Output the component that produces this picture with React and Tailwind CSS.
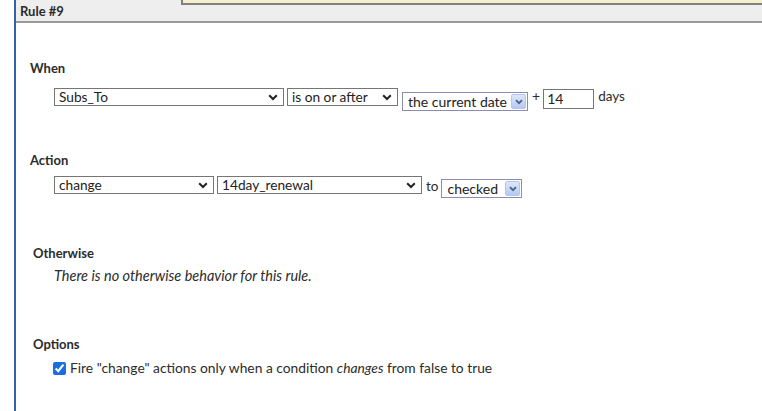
import React from "react";

const Chevron = ({ color = "#222", w = 10 }) => (
  <svg width={w} height="7" viewBox="0 0 10 7" className="shrink-0">
    <path d="M1.2 1.3 L5 5 L8.8 1.3" fill="none" stroke={color} strokeWidth="2" />
  </svg>
);

const Sel = ({ w, text }) => (
  <div
    className="flex items-center justify-between border border-[#767676] bg-white h-[18px] pl-[4px] pr-[5px] text-[13.7px] leading-none text-[#222]"
    style={{ width: w }}
  >
    <span>{text}</span>
    <Chevron />
  </div>
);

const BlueSel = ({ w, text }) => (
  <div
    className="flex items-center justify-between border border-[#8c8cb0] bg-white h-[19px] pl-[5px] pr-[1px] text-[14px] leading-none text-[#222]"
    style={{ width: w }}
  >
    <span>{text}</span>
    <div className="w-[15px] h-[15px] rounded-[2px] border border-[#b3c6ee] bg-gradient-to-b from-[#dde7fb] to-[#b4c9f3] flex items-center justify-center">
      <svg width="8" height="6" viewBox="0 0 8 6">
        <path d="M1 1.2 L4 4.2 L7 1.2" fill="none" stroke="#4d6185" strokeWidth="1.8" />
      </svg>
    </div>
  </div>
);

export default function App() {
  return (
    <div
      className="relative w-[762px] h-[411px] bg-white overflow-hidden text-[#2b2b2b]"
      style={{ fontFamily: "Lato, 'Open Sans', sans-serif" }}
    >
      <div className="absolute left-[181px] top-0 right-0 h-[5px] bg-[#f4f0cc] border-l-2 border-b-2 border-[#808080] z-10" />
      <div className="ml-[14px] h-full border-l-2 border-[#2f62b0]">
        <div className="h-[23px] bg-[#eeeeee] border-b-2 border-[#9a9a9a] flex items-center pl-[4px] pt-[2px]">
          <span className="text-[13px] font-bold">Rule #9</span>
        </div>

        <div className="pl-[14px] pt-[36px]">
          <div className="text-[13px] font-bold leading-[18px]">When</div>
          <div className="flex items-start mt-[11px] pl-[24px]">
            <Sel w="230px" text="Subs_To" />
            <div className="ml-[3px]">
              <Sel w="111px" text="is on or after" />
            </div>
            <div className="ml-[4px] mt-[4px]">
              <BlueSel w="126px" text="the current date" />
            </div>
            <span className="ml-[4px] text-[14px] leading-[14px] mt-[1px]">+</span>
            <div className="ml-[3px] mt-[1px] w-[51px] h-[20px] border border-[#767676] text-[14px] leading-[18px] pl-[3px] text-[#222]">
              14
            </div>
            <span className="ml-[4px] text-[13.5px] leading-[16px]">days</span>
          </div>

          <div className="text-[13px] font-bold leading-[18px] mt-[40px]">Action</div>
          <div className="flex items-start mt-[7px] pl-[24px]">
            <Sel w="160px" text="change" />
            <div className="ml-[3px]">
              <Sel w="205px" text="14day_renewal" />
            </div>
            <span className="ml-[4px] text-[13.5px] leading-[18px] mt-[1px]">to</span>
            <div className="ml-[3px] mt-[3px]">
              <BlueSel w="81px" text="checked" />
            </div>
          </div>

          <div className="pl-[3px]">
            <div className="text-[13px] font-bold leading-[18px] mt-[46px]">Otherwise</div>
            <div className="text-[14.5px] italic leading-[18px] mt-[5px] pl-[21px]">
              There is no otherwise behavior for this rule.
            </div>

            <div className="text-[13px] font-bold leading-[18px] mt-[50px]">Options</div>
            <div className="flex items-center mt-[6px] pl-[20px] text-[13.8px] leading-[18px]">
              <input
                type="checkbox"
                defaultChecked
                className="w-[13px] h-[13px] m-0 accent-[#1a6fe0]"
              />
              <span className="ml-[4px]">
                Fire "change" actions only when a condition <i>changes</i> from false to true
              </span>
            </div>
          </div>
        </div>
      </div>
    </div>
  );
}
